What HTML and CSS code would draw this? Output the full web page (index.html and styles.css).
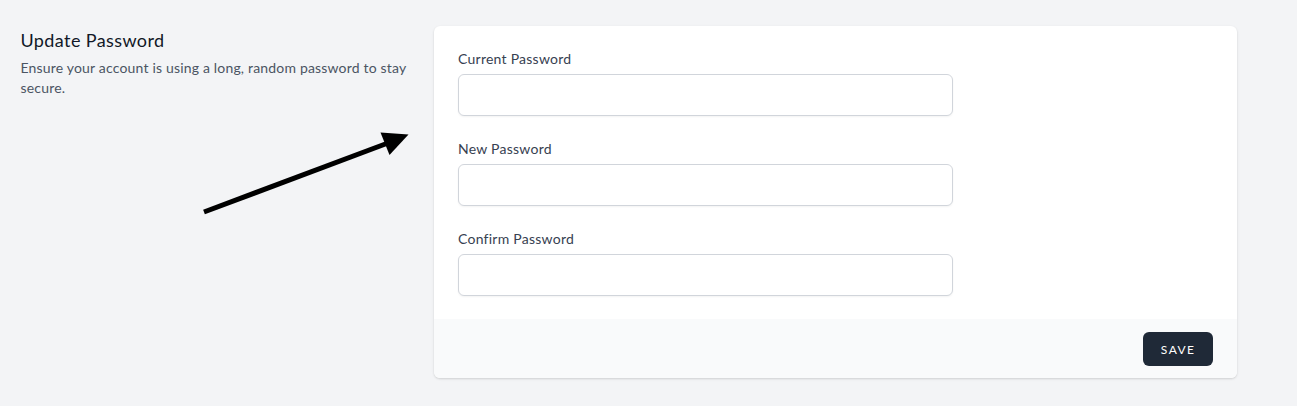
FILE: index.html
```html
<!DOCTYPE html>
<html>
<head>
<meta charset="utf-8">
<link rel="stylesheet" href="styles.css">
</head>
<body>
<div class="page">
  <div class="section">
    <div class="intro">
      <h3 class="title">Update Password</h3>
      <p class="desc">Ensure your account is using a long, random password to stay secure.</p>
    </div>
    <form class="card">
      <div class="card-body">
        <div class="field">
          <label class="label">Current Password</label>
          <input class="input" type="password">
        </div>
        <div class="field">
          <label class="label">New Password</label>
          <input class="input" type="password">
        </div>
        <div class="field">
          <label class="label">Confirm Password</label>
          <input class="input" type="password">
        </div>
      </div>
      <div class="card-footer">
        <button class="btn" type="button">Save</button>
      </div>
    </form>
  </div>
  <svg class="arrow" width="1297" height="406" viewBox="0 0 1297 406">
    <line x1="204" y1="212" x2="388" y2="143" stroke="#000" stroke-width="5"/>
    <polygon points="408.5,134.5 380.5,132.5 389.5,155" fill="#000"/>
  </svg>
</div>
</body>
</html>
```

FILE: styles.css
```css
* { box-sizing: border-box; }
html, body { margin: 0; padding: 0; }
body {
  background: #f3f4f6;
  font-family: Lato, "Noto Sans", sans-serif;
  color: #111827;
  width: 1297px;
  height: 406px;
  overflow: hidden;
}
.page {
  position: relative;
  width: 1297px;
  height: 406px;
  padding: 26px 0 0 20.5px;
}
.section {
  width: 1216.5px;
  display: grid;
  grid-template-columns: repeat(3, 1fr);
  column-gap: 24px;
}
.title {
  margin: 0;
  font-size: 18px;
  line-height: 28px;
  font-weight: 400;
  letter-spacing: 0.4px;
  color: #111827;
}
.desc {
  margin: 4px 0 0;
  font-size: 14px;
  line-height: 20px;
  letter-spacing: 0.18px;
  color: #4b5563;
}
.card {
  grid-column: span 2;
  margin: 0;
  background: #fff;
  border-radius: 6px;
  box-shadow: 0 1px 3px rgba(0,0,0,0.1), 0 1px 2px rgba(0,0,0,0.06);
  overflow: hidden;
}
.card-body {
  padding: 24px 24px 23px;
  display: flex;
  flex-direction: column;
  gap: 24px;
}
.field {
  display: flex;
  flex-direction: column;
  gap: 4px;
  width: 495px;
}
.label {
  font-size: 14px;
  line-height: 18px;
  margin-bottom: 2px;
  letter-spacing: 0.25px;
  color: #374151;
}
.input {
  height: 42px;
  width: 100%;
  border: 1px solid #d1d5db;
  border-radius: 6px;
  box-shadow: 0 1px 2px rgba(0,0,0,0.05);
  background: #fff;
  font: inherit;
  padding: 8px 12px;
}
.card-footer {
  background: #f9fafb;
  padding: 13px 24px 12px;
  display: flex;
  justify-content: flex-end;
}
.btn {
  height: 34px;
  padding: 0 17.5px;
  background: #1f2937;
  color: #fff;
  border: 0;
  border-radius: 6px;
  font-family: inherit;
  font-size: 12px;
  font-weight: 400;
  text-transform: uppercase;
  letter-spacing: 0.12em;
}
.arrow {
  position: absolute;
  left: 0;
  top: 0;
  pointer-events: none;
}
```
